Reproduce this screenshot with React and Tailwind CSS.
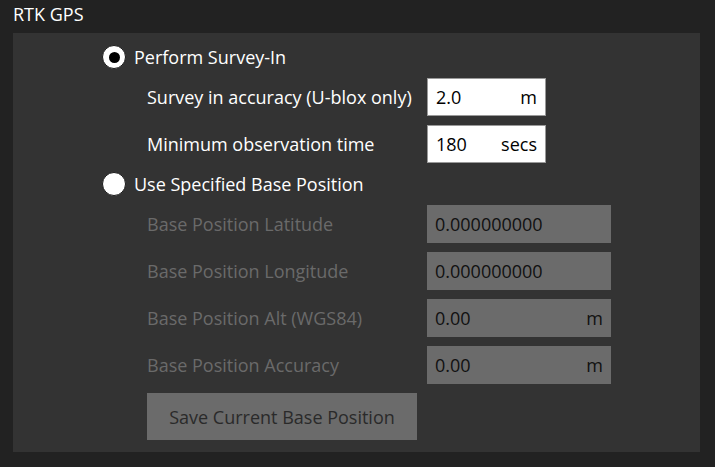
export default function App() {
  const font = { fontFamily: '"Open Sans", "Noto Sans", sans-serif' };
  const Radio = ({ checked, label }) => (
    <div className="flex h-[24px] items-center">
      <div className="flex h-[24px] w-[24px] items-center justify-center rounded-full border border-[#1a1a1a] bg-white">
        {checked && <div className="h-[11px] w-[11px] rounded-full bg-black" />}
      </div>
      <span className="ml-[8px] text-[18px] leading-none text-white">{label}</span>
    </div>
  );
  const Field = ({ label, value, unit, disabled, width }) => (
    <div className="flex items-center">
      <div className={`w-[280px] text-[18px] leading-none ${disabled ? "text-[#6a6a6a]" : "text-white"}`}>{label}</div>
      <div
        className={`flex h-[38px] items-center justify-between px-[8px] text-[18px] leading-none ${
          disabled ? "bg-[#6b6b6b] text-[#111]" : "border border-[#999] bg-white text-black"
        } ${width}`}
      >
        <span>{value}</span>
        <span>{unit}</span>
      </div>
    </div>
  );
  return (
    <div className="h-[467px] w-[715px] bg-[#222222]" style={font}>
      <div className="flex h-[33px] items-start px-[13px] pt-[3px] text-[18px] leading-[22px] text-white">RTK GPS</div>
      <div className="ml-[13px] flex h-[419px] w-[687px] flex-col gap-[9px] bg-[#333333] pb-[12px] pl-[89px] pt-[12px]">
        <Radio checked label="Perform Survey-In" />
        <div className="flex flex-col gap-[9px] pl-[45px]">
          <Field label="Survey in accuracy (U-blox only)" value="2.0" unit="m" width="w-[119px]" />
          <Field label="Minimum observation time" value="180" unit="secs" width="w-[119px]" />
        </div>
        <Radio label="Use Specified Base Position" />
        <div className="flex flex-col gap-[9px] pl-[45px]">
          <Field disabled label="Base Position Latitude" value="0.000000000" unit="" width="w-[184px]" />
          <Field disabled label="Base Position Longitude" value="0.000000000" unit="" width="w-[184px]" />
          <Field disabled label="Base Position Alt (WGS84)" value="0.00" unit="m" width="w-[184px]" />
          <Field disabled label="Base Position Accuracy" value="0.00" unit="m" width="w-[184px]" />
          <div className="flex h-[47px] w-[270px] items-center justify-center bg-[#6b6b6b] text-[18px] leading-none text-[#2a2a2a]">
            Save Current Base Position
          </div>
        </div>
      </div>
    </div>
  );
}
